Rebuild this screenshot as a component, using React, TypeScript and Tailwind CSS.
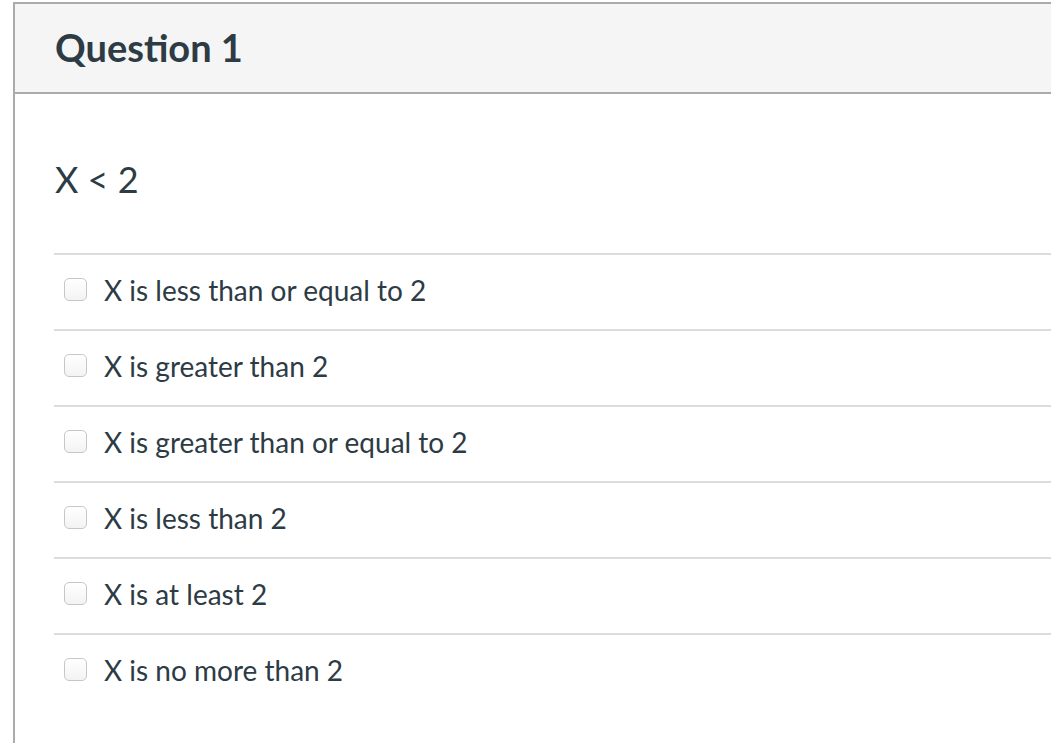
const answers = [
  'X is less than or equal to 2',
  'X is greater than 2',
  'X is greater than or equal to 2',
  'X is less than 2',
  'X is at least 2',
  'X is no more than 2',
];

export default function App() {
  return (
    <div className="h-screen w-full overflow-hidden bg-white pt-[2px] pl-[13px] font-['Lato',sans-serif] text-[#2d3b45]">
      <div className="w-[1100px] border-l-2 border-t-2 border-[#ababab] min-h-[800px]">
        {/* Header */}
        <div className="flex h-[90px] items-center border-b-2 border-[#ababab] bg-[#f5f5f5] pl-[40px]">
          <h2 className="text-[38px] font-bold leading-none pb-[2px]">Question 1</h2>
        </div>

        {/* Body */}
        <div className="pl-[39px]">
          <div className="pt-[61px] pb-[50px] text-[36px] leading-[48px] text-[#2d3b45] pl-[1px]">X &lt; 2</div>

          <div>
            {answers.map((a) => (
              <div key={a} className="flex h-[76px] items-center border-t-2 border-[#dcdcdc] pl-[10px] pb-[5px]">
                <span className="h-[23px] w-[23px] shrink-0 rounded-[5px] border border-[#c7c7c7] bg-gradient-to-b from-white to-[#f3f3f3]" />
                <span className="ml-[17px] text-[28px] leading-none">{a}</span>
              </div>
            ))}
          </div>
        </div>
      </div>
    </div>
  );
}
